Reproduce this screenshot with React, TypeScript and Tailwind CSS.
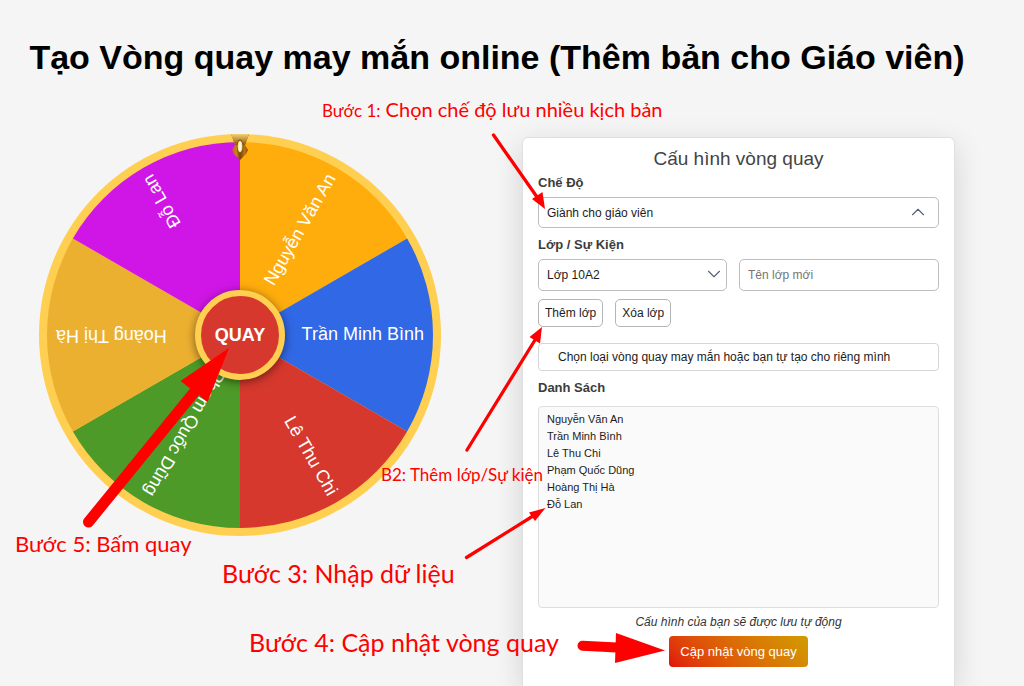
import type { ReactNode } from "react";
import { ChevronDown, ChevronUp } from "lucide-react";

interface Slice {
  name: string;
  color: string;
}

const slices: Slice[] = [
  { name: "Nguyễn Văn An", color: "#ffac0d" },
  { name: "Trần Minh Bình", color: "#3168e6" },
  { name: "Lê Thu Chi", color: "#d6382d" },
  { name: "Phạm Quốc Dũng", color: "#4d9a28" },
  { name: "Hoàng Thị Hà", color: "#ecb031" },
  { name: "Đỗ Lan", color: "#d016e6" },
];

const RADIUS = 193;

function slicePath(index: number, count: number) {
  const point = (i: number) => {
    const angle = (i / count) * Math.PI * 2 - Math.PI / 2;
    return `${Math.cos(angle) * RADIUS} ${Math.sin(angle) * RADIUS}`;
  };
  return `M0 0L${point(index)}A${RADIUS} ${RADIUS} 0 0 1 ${point(index + 1)}Z`;
}

function Wheel() {
  const step = 360 / slices.length;

  return (
    <div className="relative self-start">
      <svg viewBox="-201 -201 402 402" className="block w-full">
        <circle r="201" fill="#ffcf52" />
        {slices.map((slice, i) => (
          <path key={slice.name} d={slicePath(i, slices.length)} fill={slice.color} />
        ))}
        {slices.map((slice, i) => (
          <text
            key={slice.name}
            x="184"
            y="5"
            textAnchor="end"
            transform={`rotate(${step * (i + 0.5) - 90})`}
            className="fill-white font-['Liberation_Sans',sans-serif] text-[18px]"
          >
            {slice.name}
          </text>
        ))}
        <defs>
          <linearGradient id="gold" x1="0" x2="1">
            <stop offset="0" stopColor="#a8670f" />
            <stop offset="0.3" stopColor="#c98420" />
            <stop offset="0.5" stopColor="#7c4205" />
            <stop offset="0.75" stopColor="#b87318" />
            <stop offset="1" stopColor="#7a4204" />
          </linearGradient>
          <linearGradient id="goldTop" x1="0" x2="0" y1="0" y2="1">
            <stop offset="0" stopColor="#f3d272" />
            <stop offset="1" stopColor="#8f540c" />
          </linearGradient>
        </defs>
        <path d="M-9 -201H9L5 -190L8 -185L6 -181L0 -175L-6 -181L-8 -185L-5 -190Z" fill="url(#gold)" />
        <path d="M-9 -201H9L5 -190H-5Z" fill="url(#goldTop)" />
        <ellipse cy="-188.5" rx="3.2" ry="7" fill="#7a4204" />
        <ellipse cy="-188.5" rx="2.5" ry="6" fill="#f5d65a" />
        <ellipse cy="-188.5" rx="1.5" ry="4.8" fill="#fffbe0" />
      </svg>
      <button
        type="button"
        className="absolute top-1/2 left-1/2 size-[90px] -translate-1/2 rounded-full border-6 border-[#ffcf52] bg-[#d6382d] text-lg font-bold text-white shadow-[0_2px_10px_rgba(0,0,0,0.5)]"
      >
        QUAY
      </button>
    </div>
  );
}

function Label({ htmlFor, children }: { htmlFor: string; children: ReactNode }) {
  return (
    <label htmlFor={htmlFor} className="block text-[13px] leading-5 font-bold text-[#3c3c3c]">
      {children}
    </label>
  );
}

function ConfigPanel() {
  return (
    <form className="mt-[3px] flex flex-col rounded-t-md border border-b-0 border-[#e0e0e0] bg-white px-[15px] pt-[7px] text-xs text-[#1c1c1c] shadow-[0_8px_30px_rgba(0,0,0,0.14)]">
      <h2 className="text-center text-[19px] leading-7 text-[#444]">Cấu hình vòng quay</h2>

      <Label htmlFor="mode">Chế Độ</Label>
      <div className="relative mt-1">
        <select
          id="mode"
          className="h-[31px] w-full appearance-none rounded-[5px] border border-[#bdbdbd] bg-white px-2"
        >
          <option>Giành cho giáo viên</option>
        </select>
        <ChevronUp
          size={22}
          strokeWidth={1.2}
          className="pointer-events-none absolute top-1 right-2.5 text-[#56607a]"
        />
      </div>

      <div className="mt-[7px]">
        <Label htmlFor="group">Lớp / Sự Kiện</Label>
      </div>
      <div className="mt-1 grid grid-cols-[189fr_200fr] gap-3">
        <div className="relative">
          <select
            id="group"
            className="h-8 w-full appearance-none rounded-[5px] border border-[#bdbdbd] bg-white px-2"
          >
            <option>Lớp 10A2</option>
          </select>
          <ChevronDown
            size={22}
            strokeWidth={1.2}
            className="pointer-events-none absolute top-1 right-0.5 text-[#56607a]"
          />
        </div>
        <input
          type="text"
          aria-label="Tên lớp mới"
          placeholder="Tên lớp mới"
          className="h-8 w-full rounded-[5px] border border-[#bdbdbd] px-2 placeholder:text-[#757575]"
        />
      </div>
      <div className="mt-2 flex gap-3">
        <button type="button" className="h-7 rounded-[5px] border border-[#b5b5b5] px-1.5">
          Thêm lớp
        </button>
        <button type="button" className="h-7 rounded-[5px] border border-[#b5b5b5] px-1.5">
          Xóa lớp
        </button>
      </div>

      <button type="button" className="mt-4 h-7 rounded-sm border border-[#d6d6d6] px-[19px] text-left">
        Chọn loại vòng quay may mắn hoặc bạn tự tạo cho riêng mình
      </button>

      <div className="mt-[7px]">
        <Label htmlFor="names">Danh Sách</Label>
      </div>
      <textarea
        id="names"
        defaultValue={slices.map((slice) => slice.name).join("\n")}
        className="mt-2 h-[202px] resize-none rounded-sm border border-[#dedede] bg-[#fafafa] px-2 py-1 text-[11px] leading-[17px]"
      />

      <p className="mt-1 text-center leading-5 text-[#333] italic">Cấu hình của bạn sẽ được lưu tự động</p>
      <button
        type="button"
        className="mt-1 h-[31px] self-center rounded bg-linear-45 from-[#e00a0a] to-[#d09c00] px-[11px] text-[13px] text-white"
      >
        Cập nhật vòng quay
      </button>
    </form>
  );
}

function Guide() {
  return (
    <div className="pointer-events-none absolute inset-0 font-[Lato,sans-serif] text-[#f00]">
      <svg width="1024" height="686" fill="currentColor" stroke="currentColor" className="absolute top-0 left-0">
        <g strokeWidth="3.300" strokeLinecap="round">
          <path d="M493.500 135L537 197" />
          <path d="M467 450L535 340" />
          <path d="M466.500 557.500L533 516" />
        </g>
        <path d="M582.500 645.700L617 647.500" strokeWidth="10" strokeLinecap="round" />
        <path d="M88.500 522L196 390" strokeWidth="11" strokeLinecap="round" />
        <g stroke="none">
          <path d="M545 209L532 199L542.500 192Z" />
          <path d="M542 327L529.500 337L540 343.500Z" />
          <path d="M545.500 508L529 512.500L535 521Z" />
          <path d="M665 650.500L616 633L615 663Z" />
          <path d="M229 348L180.500 381L207.500 402Z" />
        </g>
      </svg>
      <p className="absolute top-[95px] left-[322px] text-xl leading-7 whitespace-nowrap">
        <span className="text-[17px]">Bước 1:</span> Chọn chế độ lưu nhiều kịch bản
      </p>
      <p className="absolute top-[461px] left-[381px] text-[17px] leading-7 whitespace-nowrap">
        B2: Thêm lớp/Sự kiện
      </p>
      <p className="absolute top-[530px] left-[15px] text-[22px] leading-7 whitespace-nowrap">Bước 5: Bấm quay</p>
      <p className="absolute top-[559px] left-[222px] text-[25px] leading-7 whitespace-nowrap">
        Bước 3: Nhập dữ liệu
      </p>
      <p className="absolute top-[628px] left-[249px] text-[25px] leading-7 whitespace-nowrap">
        Bước 4: Cập nhật vòng quay
      </p>
    </div>
  );
}

export default function App() {
  return (
    <div className="relative flex min-h-screen flex-col overflow-hidden bg-[#f5f5f5] pt-[37px] pr-[69px] pl-[39px] font-['Liberation_Sans',Arial,sans-serif]">
      <h1 className="-mx-4 text-center text-[34px] leading-10 font-bold whitespace-nowrap text-black">
        Tạo Vòng quay may mắn online (Thêm bản cho Giáo viên)
      </h1>
      <main className="mt-[57px] grid flex-1 grid-cols-[402fr_433fr] gap-[81px]">
        <Wheel />
        <ConfigPanel />
      </main>
      <Guide />
    </div>
  );
}
